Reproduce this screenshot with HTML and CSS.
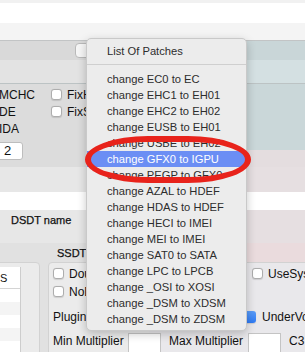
FILE: index.html
```html
<!DOCTYPE html>
<html lang="en">
<head>
<meta charset="utf-8">
<title>List Of Patches</title>
<link rel="stylesheet" href="styles.css">
</head>
<body>
<div class="win">
  <div class="strip-top"></div>
  <div class="strip-white"></div>
  <div class="strip-tabs"></div>
  <div class="toolbar"><div class="popup"></div></div>
  <div class="subbar"></div>

  <div class="fixes">
    <div class="fix-grid">
      <span class="lbl">MCHC</span>
      <span class="cb-item"><span class="cb"></span><span>FixHPET</span></span>
      <span class="lbl">DE</span>
      <span class="cb-item"><span class="cb"></span><span>FixShutdown</span></span>
      <span class="lbl">IDA</span>
      <span></span>
    </div>
    <div class="num">2</div>
  </div>

  <div class="dsdt">
    <div class="namefield"></div>
    <div class="colhead">DSDT name</div>
  </div>

  <div class="ssdt">
    <div class="ssdt-title">SSDT</div>
    <div class="boxes">
      <div class="box left">
        <div class="table">
          <div class="th">S</div>
          <div class="tr"></div>
          <div class="tr alt"></div>
          <div class="tr"></div>
          <div class="tr alt"></div>
          <div class="tr"></div>
        </div>
      </div>
      <div class="box right">
        <div class="row r1">
          <span class="cell c1"><span class="cb"></span><span>DoubleFirstState</span></span>
          <span class="cell"><span class="cb"></span><span>UseSystemIO</span></span>
        </div>
        <div class="row r2">
          <span class="cell c1"><span class="cb"></span><span>NoDynamicExtract</span></span>
        </div>
        <div class="row r3">
          <span class="cell c3">PluginType</span>
          <span class="cell"><span class="cb on"></span><span>UnderVoltStep</span></span>
        </div>
        <div class="row r4">
          <span class="ml1">Min Multiplier</span>
          <span class="inp"></span>
          <span class="ml2">Max Multiplier</span>
          <span class="inp"></span>
          <span class="ml3">C3 Latency</span>
        </div>
      </div>
    </div>
  </div>
</div>

<div class="menu">
  <div class="mi">List Of Patches</div>
  <div class="sep"></div>
  <div class="mi">change EC0 to EC</div>
  <div class="mi">change EHC1 to EH01</div>
  <div class="mi">change EHC2 to EH02</div>
  <div class="mi">change EUSB to EH01</div>
  <div class="mi">change USBE to EH02</div>
  <div class="mi sel">change GFX0 to IGPU</div>
  <div class="mi">change PEGP to GFX0</div>
  <div class="mi">change AZAL to HDEF</div>
  <div class="mi">change HDAS to HDEF</div>
  <div class="mi">change HECI to IMEI</div>
  <div class="mi">change MEI to IMEI</div>
  <div class="mi">change SAT0 to SATA</div>
  <div class="mi">change LPC to LPCB</div>
  <div class="mi">change _OSI to XOSI</div>
  <div class="mi">change _DSM to XDSM</div>
  <div class="mi">change _DSM to ZDSM</div>
</div>

<div class="ring"></div>
</body>
</html>
```

FILE: styles.css
```css
* { box-sizing: border-box; }
html, body { margin: 0; padding: 0; }
body {
  width: 305px;
  height: 352px;
  overflow: hidden;
  position: relative;
  font-family: "Liberation Sans", Arial, sans-serif;
  font-size: 12px;
  color: #111;
  background: #e6e6e6;
}
.win { width: 305px; }
.strip-top { height: 3px; background: #f1f1f1; }
.strip-white { height: 20px; background: #fff; }
.strip-tabs { height: 18px; background: #f4f4f4; border-bottom: 1px solid #c2c4c5; }
.toolbar {
  height: 19px;
  padding-top: 2px;
  background: linear-gradient(to right, #d9d9d9 0 150px, #c9d6d8 150px);
}
.popup {
  margin-left: 75px;
  width: 60px;
  height: 15px;
  background: #f6f6f6;
  border: 1px solid #b9b9b9;
  border-radius: 4px;
}
.subbar {
  height: 24px;
  background: linear-gradient(to right, #e3e3e3 0 150px, #d4e0e2 150px);
  border-bottom: 1px solid #bcc3c4;
}

.fixes {
  height: 83px;
  padding-top: 2px;
  background:
    linear-gradient(to right, #dcdcdc 0 150px, transparent 150px),
    linear-gradient(to bottom, #cad7d9 0 66px, #e4dddf 66px);
}
.fix-grid {
  display: grid;
  grid-template-columns: 51px auto;
  grid-auto-rows: 17px;
  align-items: center;
}
.lbl { margin-left: -1px; white-space: nowrap; }
.cb-item { display: flex; align-items: center; gap: 5px; white-space: nowrap; }
.cb {
  flex: none;
  width: 11px;
  height: 11px;
  background: #fff;
  border: 1px solid #adadad;
  border-radius: 3px;
  box-shadow: 0 0.5px 1px rgba(0,0,0,.12);
}
.cb.on {
  width: 12px;
  height: 12px;
  border: none;
  background: linear-gradient(#5a9cf8, #2f7bf4);
}
.num {
  margin-top: 5px;
  margin-left: -10px;
  width: 33px;
  height: 18px;
  padding-left: 13px;
  line-height: 16px;
  font-size: 13px;
  background: #fff;
  border: 1px solid #bdbdbd;
  border-radius: 3px;
}

.dsdt {
  height: 76px;
  padding-top: 25px;
  background: linear-gradient(to right, #e7e7e7 0 150px, #e6dfe1 150px);
}
.namefield { height: 18px; background: #fff; }
.colhead { margin-top: 3px; padding-left: 11px; font-size: 11px; line-height: 14px; -webkit-text-stroke: 0.25px #111; }

.ssdt {
  height: 109px;
  padding-top: 3px;
  background: linear-gradient(to right, #e1e1e1 0 150px, #eadbdd 150px);
}
.ssdt-title { padding-left: 57px; font-size: 11px; line-height: 14px; -webkit-text-stroke: 0.25px #111; }
.boxes { display: flex; gap: 8px; margin-top: 2px; margin-left: -10px; }
.box {
  flex: none;
  height: 120px;
  border: 1px solid #d2d2d2;
  border-radius: 4px;
}
.box.left { width: 50px; padding-top: 4px; background: #ebebeb; }
.table { width: 30px; height: 100px; background: #fff; border-right: 1px solid #cdcdcd; }
.th {
  height: 22px;
  padding-left: 9px;
  line-height: 22px;
  font-size: 11px;
  border-bottom: 1px solid #d4d4d4;
}
.tr { height: 13px; }
.tr.alt { background: #f4f4f4; }

.box.right {
  width: 300px;
  padding: 4px 0 0 4px;
  background: linear-gradient(to right, #ebebeb 0 100px, #e9e8eb 100px);
}
.row { display: flex; align-items: center; white-space: nowrap; }
.cell { display: flex; align-items: center; gap: 5px; }
.r1 { height: 13px; }
.r2 { height: 13px; margin-top: 5px; }
.r3 { height: 14px; margin-top: 12px; }
.r4 { height: 20px; margin-top: 9px; align-items: flex-start; line-height: 17px; }
.c1 { width: 199px; flex: none; }
.c3 { width: 191px; flex: none; }
.r3 .cell + .cell { gap: 6px; }
.ml1 { width: 75px; flex: none; }
.ml2 { width: 79px; flex: none; margin-left: 8px; }
.ml3 { margin-left: 8px; }
.inp { width: 33px; height: 20px; flex: none; background: #fff; border: 1px solid #c4c4c4; }

.menu {
  position: absolute;
  left: 86px;
  top: 38px;
  width: 161px;
  padding: 4px 0 3px;
  background: #ececec;
  border: 1px solid #c9c9c9;
  border-radius: 5px;
  box-shadow: 0 3px 10px rgba(0,0,0,.22);
  font-size: 11.2px;
  color: #2d2d2d;
}
.mi { height: 16px; line-height: 16px; padding-left: 20px; white-space: nowrap; }
.mi.sel { background: #6b8ef4; color: #fff; }
.sep { height: 12px; padding-top: 5px; }
.sep::before { content: ""; display: block; height: 1px; background: #cfcfcf; }

.ring {
  position: absolute;
  left: 85px;
  top: 136px;
  width: 166px;
  height: 47px;
  border: 6px solid #e8231b;
  border-radius: 38% / 50%;
}
```
